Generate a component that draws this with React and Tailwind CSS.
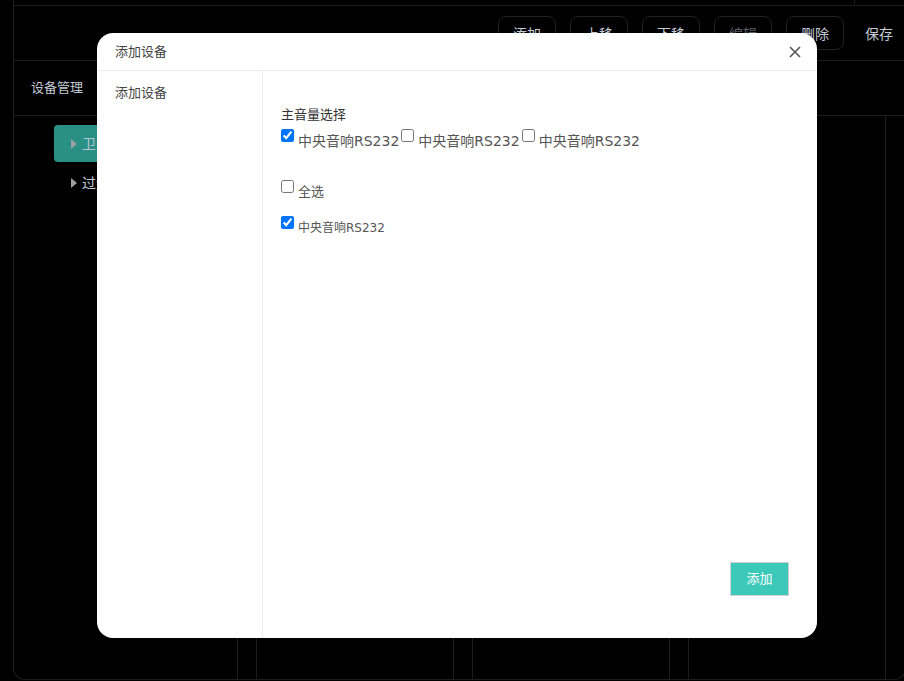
import React, { useState } from "react";

const font = { fontFamily: '"Open Sans", "Noto Sans CJK SC", sans-serif' };
const labelFont = { fontFamily: '"DejaVu Sans", "Noto Sans CJK SC", sans-serif' };

function ToolButton({ children, dim }) {
  return (
    <button
      className={
        "h-[34px] w-[58px] rounded-lg border border-[#222] text-[14px] " +
        (dim ? "text-[#5a5f66]" : "text-[#c3cad6]")
      }
    >
      {children}
    </button>
  );
}

function Arrow() {
  return <span className="h-0 w-0 border-y-[5px] border-l-[6px] border-y-transparent border-l-[#9aa0a6]" />;
}

function Background() {
  return (
    <div className="ml-[13px] flex h-[680px] w-[893px] flex-col rounded-bl-xl rounded-br-xl border-b border-l border-r border-[#1c1c1c]">
      <div className="flex h-[6px] border-b border-[#1c1c1c]">
        <div className="w-[841px] border-r border-[#1c1c1c]" />
      </div>
      <div className="flex h-[55px] items-center justify-end gap-[14px] border-b border-[#1c1c1c] pr-[12px]">
        <ToolButton>添加</ToolButton>
        <ToolButton>上移</ToolButton>
        <ToolButton>下移</ToolButton>
        <ToolButton dim>编辑</ToolButton>
        <ToolButton>删除</ToolButton>
        <span className="ml-[7px] text-[14px] text-[#c3cad6]">保存</span>
      </div>
      <div className="flex h-[55px] items-center border-b border-[#1c1c1c] pl-[17px] text-[13px] text-[#c3cad6]">
        设备管理
      </div>
      <div className="flex flex-1 gap-[18px]">
        <div className="w-[224px] border-r border-[#1c1c1c] pl-[40px] pt-[9px]">
          <div className="flex h-[37px] items-center gap-[5px] rounded bg-[#2a8f84] pl-[17px] text-[14px] text-[#b9c4cc]">
            <Arrow />
            卫星接收
          </div>
          <div className="mt-[2px] flex h-[37px] items-center gap-[5px] pl-[17px] text-[14px] text-[#c3cad6]">
            <Arrow />
            过道音响
          </div>
        </div>
        <div className="w-[198px] border-l border-r border-[#1c1c1c]" />
        <div className="w-[198px] border-l border-r border-[#1c1c1c]" />
        <div className="w-[198px] border-l border-r border-[#1c1c1c]" />
      </div>
    </div>
  );
}

function Check({ checked, label, className, drop }) {
  const [on, setOn] = useState(checked);
  return (
    <label className={"inline-flex items-start " + (className || "")}>
      <input
        type="checkbox"
        checked={on}
        onChange={() => setOn(!on)}
        className="m-0 mr-[4px] mt-[1px] h-[13px] w-[13px]"
      />
      <span className={drop}>{label}</span>
    </label>
  );
}

function Modal() {
  return (
    <div className="absolute left-[97px] top-[33px] flex h-[605px] w-[720px] flex-col overflow-hidden rounded-2xl bg-white">
      <div className="flex h-[38px] items-center justify-between border-b border-[#ebebeb] pl-[18px] pr-[16px]">
        <span className="text-[13px] text-[#444]">添加设备</span>
        <svg width="12" height="12" viewBox="0 0 12 12" className="text-[#555]">
          <path d="M1 1 L11 11 M11 1 L1 11" stroke="currentColor" strokeWidth="1.6" />
        </svg>
      </div>
      <div className="flex flex-1">
        <div className="w-[166px] border-r border-[#ededed] pl-[18px] pt-[12px] text-[13px] text-[#444]">
          添加设备
        </div>
        <div className="flex flex-1 flex-col pl-[18px] pt-[36px]" style={labelFont}>
          <div className="text-[13px] leading-[16px] text-[#333]">主音量选择</div>
          <div className="mt-[5px] flex items-start text-[14px] leading-[20px] text-[#555]">
            <Check checked label="中央音响RS232" className="mr-[2px]" drop="mt-[3px]" />
            <Check label="中央音响RS232" className="mr-[2px]" drop="mt-[3px]" />
            <Check label="中央音响RS232" drop="mt-[3px]" />
          </div>
          <div className="mt-[28px] text-[13px] leading-[18px] text-[#555]">
            <Check label="全选" drop="mt-[4px]" />
          </div>
          <div className="mt-[14px] text-[12px] leading-[18px] text-[#555]">
            <Check checked label="中央音响RS232" drop="mt-[4px]" />
          </div>
          <div className="mt-auto mb-[42px] flex justify-end pr-[28px]">
            <button
              className="h-[34px] w-[59px] border border-[#d0d0d0] bg-[#3cc9b9] text-[13px] text-white"
              style={font}
            >
              添加
            </button>
          </div>
        </div>
      </div>
    </div>
  );
}

export default function App() {
  return (
    <div className="relative h-[681px] w-[904px] overflow-hidden bg-black" style={font}>
      <Background />
      <Modal />
    </div>
  );
}
